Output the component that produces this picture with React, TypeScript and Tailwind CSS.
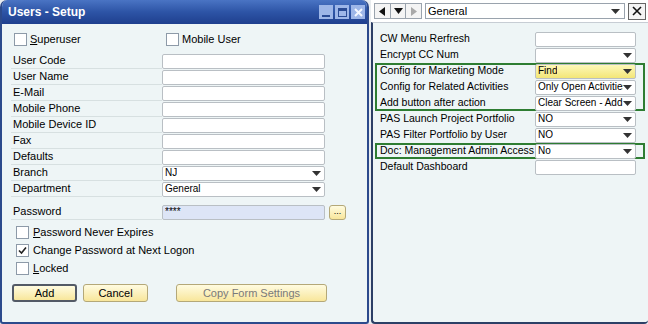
const font = "font-['Liberation_Sans','Arial',sans-serif]";

function Check({ checked }: { checked?: boolean }) {
  return (
    <span className="flex h-[13px] w-[13px] shrink-0 items-center justify-center border border-[#8d9aa8] bg-white">
      {checked && (
        <svg width="9" height="9" viewBox="0 0 9 9">
          <path d="M1 4.5 L3.5 7 L8 1.5" fill="none" stroke="#222" strokeWidth="1.6" />
        </svg>
      )}
    </span>
  );
}

function Arrow() {
  return (
    <svg width="9" height="5" viewBox="0 0 9 5" className="shrink-0">
      <path d="M0 0 H9 L4.5 5 Z" fill="#333" />
    </svg>
  );
}

function Field({ value, select, w = "w-[163px]", bg = "bg-white" }: { value?: string; select?: boolean; w?: string; bg?: string }) {
  return (
    <div className={`flex h-[15px] ${w} shrink-0 items-center justify-between rounded-[2px] border border-[#b9bfc4] ${bg} pl-[2px] pr-[3px] text-[10px] leading-none text-black`}>
      <span className="overflow-hidden whitespace-nowrap">{value}</span>
      {select && <Arrow />}
    </div>
  );
}

const leftRows: { label: string; value?: string; select?: boolean }[] = [
  { label: "User Code" },
  { label: "User Name" },
  { label: "E-Mail" },
  { label: "Mobile Phone" },
  { label: "Mobile Device ID" },
  { label: "Fax" },
  { label: "Defaults" },
  { label: "Branch", value: "NJ", select: true },
  { label: "Department", value: "General", select: true },
];

function YellowButton({ children, w, disabled }: { children: React.ReactNode; w: string; disabled?: boolean }) {
  return (
    <div
      className={`flex h-[18px] ${w} items-center justify-center rounded-[3px] border border-[#b4a878] bg-gradient-to-b from-[#fffbe0] to-[#f8e69a] text-[11px] ${disabled ? "text-[#7a7a7a]" : "text-black"}`}
    >
      {children}
    </div>
  );
}

function UsersSetup() {
  return (
    <div className="flex h-[324px] w-[369px] flex-col overflow-hidden rounded-t-[7px] rounded-b-[3px] border-x-2 border-b-2 border-[#2c4a8c] bg-[#eef5f6]">
      <div className="flex h-[24px] shrink-0 items-center justify-between bg-gradient-to-b from-[#4a74c4] via-[#2d54a6] to-[#1f3f8e] pl-[6px] pr-[2px]">
        <span className="text-[12px] font-bold text-white">Users - Setup</span>
        <div className="flex gap-[2px]">
          <div className="flex h-[14px] w-[14px] items-end justify-center bg-[#9db6e8] pb-[2px]">
            <div className="h-[2px] w-[8px] bg-[#2a4b95]" />
          </div>
          <div className="flex h-[14px] w-[14px] items-center justify-center bg-[#9db6e8]">
            <div className="h-[9px] w-[9px] border-[1.5px] border-t-[3px] border-[#2a4b95]" />
          </div>
          <div className="flex h-[14px] w-[14px] items-center justify-center bg-[#9db6e8]">
            <svg width="9" height="9" viewBox="0 0 9 9">
              <path d="M1 1 L8 8 M8 1 L1 8" stroke="#f4f7ff" strokeWidth="2" />
            </svg>
          </div>
        </div>
      </div>
      <div className="flex flex-col pl-[9px] pt-[8px]">
        <div className="flex h-[14px] items-center">
          <div className="flex w-[155px] items-center gap-[3px] pl-[3px]">
            <Check />
            <span className="text-[11px]"><u>S</u>uperuser</span>
          </div>
          <div className="flex items-center gap-[3px]">
            <Check />
            <span className="text-[11px]">Mobile User</span>
          </div>
        </div>
        <div className="mt-[7px] flex flex-col">
          {leftRows.map((r) => (
            <div key={r.label} className="flex h-[16px] items-center">
              <div className="flex h-[16px] w-[151px] items-center border-b border-[#d7e0e1] pl-[2px] text-[11px]">{r.label}</div>
              <Field value={r.value} select={r.select} />
            </div>
          ))}
        </div>
        <div className="mt-[7px] flex h-[16px] items-center">
          <div className="flex h-[16px] w-[151px] items-center border-b border-[#d7e0e1] pl-[2px] text-[11px]">Password</div>
          <Field value="****" bg="bg-[#dde5f6]" />
          <div className="ml-[4px] flex h-[15px] w-[17px] items-start justify-center rounded-[3px] border border-[#b4a878] bg-gradient-to-b from-[#fffbe0] to-[#f8e69a] text-[9px] leading-[10px]">...</div>
        </div>
        <div className="mt-[3px] flex flex-col pl-[5px]">
          <div className="flex h-[18px] items-center gap-[4px]">
            <Check />
            <span className="text-[11px]"><u>P</u>assword Never Expires</span>
          </div>
          <div className="flex h-[18px] items-center gap-[4px]">
            <Check checked />
            <span className="text-[11px]">Change Password at Next Logon</span>
          </div>
          <div className="flex h-[19px] items-center gap-[4px]">
            <Check />
            <span className="text-[11px]"><u>L</u>ocked</span>
          </div>
        </div>
        <div className="mt-[6px] flex items-center">
          <div className="ml-[1px] flex h-[18px] w-[65px] items-center justify-center rounded-[3px] border-2 border-[#535a66] bg-gradient-to-b from-[#fffbe0] to-[#f8e69a] text-[11px]">Add</div>
          <div className="ml-[6px]">
            <YellowButton w="w-[65px]">Cancel</YellowButton>
          </div>
          <div className="ml-[28px]">
            <YellowButton w="w-[151px]" disabled>Copy Form Settings</YellowButton>
          </div>
        </div>
      </div>
    </div>
  );
}

const rightRows: { label: string; value?: string; select?: boolean; yellow?: boolean }[] = [
  { label: "CW Menu Rerfresh" },
  { label: "Encrypt CC Num", select: true },
  { label: "Config for Marketing Mode", value: "Find", select: true, yellow: true },
  { label: "Config for Related Activities", value: "Only Open Activities", select: true },
  { label: "Add button after action", value: "Clear Screen - Add I", select: true },
  { label: "PAS Launch Project Portfolio", value: "NO", select: true },
  { label: "PAS Filter Portfolio by User", value: "NO", select: true },
  { label: "Doc: Management Admin Access", value: "No", select: true },
  { label: "Default Dashboard" },
];

function RightRow({ r }: { r: (typeof rightRows)[number] }) {
  return (
    <div className="flex h-[16px] items-center pl-[5px]">
      <div className="w-[155px] shrink-0 whitespace-nowrap text-[10.5px]">{r.label}</div>
      <Field value={r.value} select={r.select} w="w-[101px]" bg={r.yellow ? "bg-gradient-to-b from-[#fdf8b8] to-[#f3e676]" : "bg-white"} />
    </div>
  );
}

function ExtraPanel() {
  return (
    <div className="flex h-[324px] w-[277px] flex-col">
      <div className="flex h-[22px] shrink-0 items-center bg-white pl-[3px]">
        <div className="flex h-[16px] w-[48px] items-center border border-[#9aa3ad] bg-[#f4f4f4]">
          <div className="flex h-full w-[16px] items-center justify-center border-r border-[#9aa3ad]">
            <svg width="6" height="9" viewBox="0 0 6 9"><path d="M6 0 V9 L0 4.5 Z" fill="#111" /></svg>
          </div>
          <div className="flex h-full w-[16px] items-center justify-center border-r border-[#9aa3ad]">
            <svg width="9" height="6" viewBox="0 0 9 6"><path d="M0 0 H9 L4.5 6 Z" fill="#111" /></svg>
          </div>
          <div className="flex h-full w-[15px] items-center justify-center">
            <svg width="6" height="9" viewBox="0 0 6 9"><path d="M0 0 V9 L6 4.5 Z" fill="#a9a9a9" /></svg>
          </div>
        </div>
        <div className="ml-[3px] flex h-[16px] w-[200px] items-center justify-between border border-[#9aa3ad] bg-white pl-[2px] pr-[4px] text-[11px]">
          <span>General</span>
          <Arrow />
        </div>
        <div className="ml-[3px] flex h-[17px] w-[18px] items-center justify-center border border-[#666] bg-[#f4f4f4]">
          <svg width="10" height="10" viewBox="0 0 10 10"><path d="M1 1 L9 9 M9 1 L1 9" stroke="#111" strokeWidth="1.6" /></svg>
        </div>
      </div>
      <div className="flex flex-1 flex-col rounded-b-[4px] border-b-2 border-l-2 border-[#2c3f66] border-t border-t-[#c7cdd4] bg-[#eef5f6] pl-[2px] pt-[8px]">
        <RightRow r={rightRows[0]} />
        <RightRow r={rightRows[1]} />
        <div className="w-[270px] ring-2 ring-inset ring-[#2e7d32]">
          {rightRows.slice(2, 5).map((r) => (
            <RightRow key={r.label} r={r} />
          ))}
        </div>
        <RightRow r={rightRows[5]} />
        <RightRow r={rightRows[6]} />
        <div className="w-[270px] ring-2 ring-inset ring-[#2e7d32]">
          <RightRow r={rightRows[7]} />
        </div>
        <RightRow r={rightRows[8]} />
      </div>
    </div>
  );
}

export default function App() {
  return (
    <div className={`flex h-[324px] w-[648px] gap-[2px] bg-[#e8ecef] text-black ${font}`}>
      <UsersSetup />
      <ExtraPanel />
    </div>
  );
}
